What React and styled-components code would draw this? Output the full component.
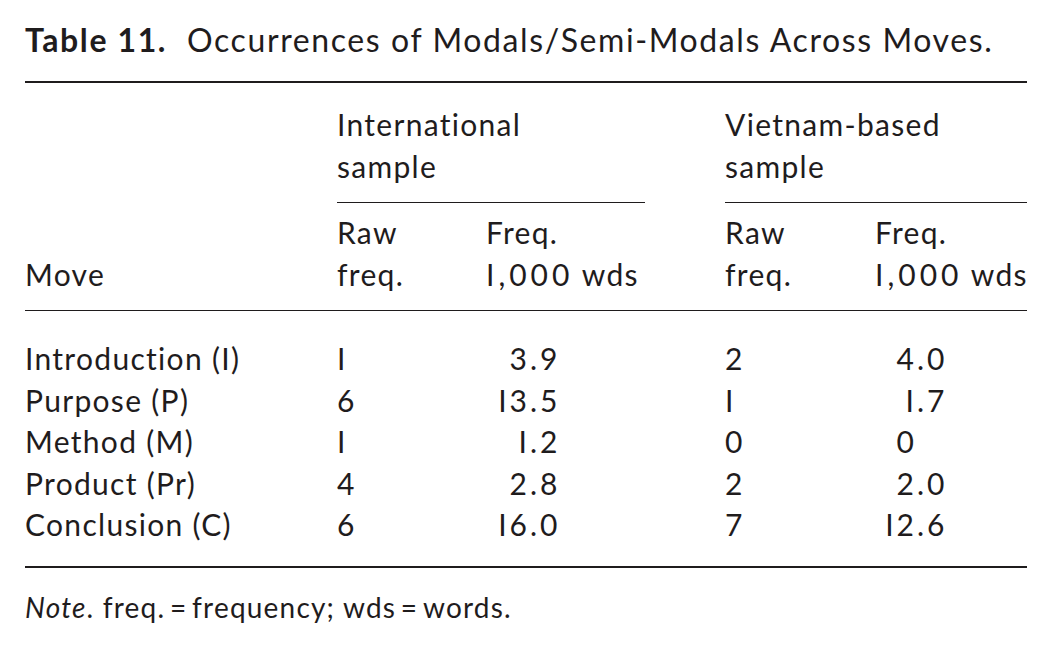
import React from 'react';
import styled, { createGlobalStyle } from 'styled-components';

const GlobalStyle = createGlobalStyle`
  html, body {
    margin: 0;
    padding: 0;
    background: #ffffff;
  }
  body {
    font-family: Lato, "Open Sans", sans-serif;
    color: #1f1c1d;
  }
`;

const Page = styled.div`
  width: 1058px;
  height: 659px;
  padding: 0 31px 0 25px;
  box-sizing: border-box;
  overflow: hidden;
`;

const Caption = styled.div`
  font-size: 32px;
  line-height: 40px;
  letter-spacing: 1.6px;
  padding-top: 20px;
  height: 81px;
  box-sizing: border-box;
  white-space: nowrap;
`;

const Label = styled.span`
  font-weight: 700;
  margin-right: 20px;
`;

const Table = styled.table`
  width: 1002px;
  table-layout: fixed;
  border-collapse: collapse;
  border-top: 2px solid #1f1c1d;
  border-bottom: 2px solid #1f1c1d;
  font-size: 30px;
  line-height: 41.5px;
  letter-spacing: 1.3px;
`;

const Cell = styled.td`
  padding: 0;
  vertical-align: ${(p) => (p.$bottom ? 'bottom' : 'top')};
  text-align: left;
  white-space: nowrap;
`;

const HeadRow = styled.tr`
  & > td {
    padding-top: ${(p) => p.$top || 0}px;
    padding-bottom: ${(p) => p.$bottom || 0}px;
  }
`;

const Spanner = styled(Cell)`
  border-bottom: 1.5px solid #1f1c1d;
`;

const ColRow = styled(HeadRow)`
  border-bottom: 1.5px solid #1f1c1d;
`;

const Num = styled.span`
  letter-spacing: ${(p) => p.$spacing || 3}px;
`;

const BodyRow = styled.tr`
  &:first-child > td {
    padding-top: 27px;
  }
  &:last-child > td {
    padding-bottom: 20px;
  }
`;

const Int = styled.span`
  display: inline-block;
  width: ${(p) => p.$w}px;
  text-align: right;
`;

const Note = styled.p`
  margin: 0;
  padding-top: 19px;
  font-size: 28px;
  line-height: 40px;
  letter-spacing: 1.2px;
`;

const rows = [
  ['Introduction (I)', '1', '3.9', '2', '4.0'],
  ['Purpose (P)', '6', '13.5', '1', '1.7'],
  ['Method (M)', '1', '1.2', '0', '0'],
  ['Product (Pr)', '4', '2.8', '2', '2.0'],
  ['Conclusion (C)', '6', '16.0', '7', '12.6'],
];

// the "1" in the source face looks like a capital I
const one = (s) => s.replace(/1/g, 'I');

const Dec = ({ value, w }) => {
  const [i, f] = value.split('.');
  return (
    <Num>
      <Int $w={w}>{one(i)}</Int>
      {f !== undefined ? '.' + one(f) : ''}
    </Num>
  );
};

export default function App() {
  return (
    <Page>
      <GlobalStyle />
      <Caption>
        <Label>Table 11.</Label>Occurrences of Modals/Semi-Modals Across Moves.
      </Caption>
      <Table>
        <colgroup>
          <col style={{ width: 312 }} />
          <col style={{ width: 149 }} />
          <col style={{ width: 159 }} />
          <col style={{ width: 80 }} />
          <col style={{ width: 150 }} />
          <col style={{ width: 152 }} />
        </colgroup>
        <thead>
          <HeadRow $top={21} $bottom={15}>
            <Cell />
            <Spanner colSpan={2}>
              International
              <br />
              sample
            </Spanner>
            <Cell />
            <Spanner colSpan={2}>
              Vietnam-based
              <br />
              sample
            </Spanner>
          </HeadRow>
          <ColRow $top={9} $bottom={15}>
            <Cell $bottom>Move</Cell>
            <Cell>
              Raw
              <br />
              freq.
            </Cell>
            <Cell>
              Freq.
              <br />
              <Num $spacing={4}>I,000</Num> wds
            </Cell>
            <Cell />
            <Cell>
              Raw
              <br />
              freq.
            </Cell>
            <Cell>
              Freq.
              <br />
              <Num $spacing={4}>I,000</Num> wds
            </Cell>
          </ColRow>
        </thead>
        <tbody>
          {rows.map(([move, r1, f1, r2, f2]) => (
            <BodyRow key={move}>
              <Cell>{move}</Cell>
              <Cell>{one(r1)}</Cell>
              <Cell>
                <Dec value={f1} w={44} />
              </Cell>
              <Cell />
              <Cell>{one(r2)}</Cell>
              <Cell>
                <Dec value={f2} w={42} />
              </Cell>
            </BodyRow>
          ))}
        </tbody>
      </Table>
      <Note>
        <i>Note</i>. freq.&#8201;=&#8201;frequency; wds&#8201;=&#8201;words.
      </Note>
    </Page>
  );
}
